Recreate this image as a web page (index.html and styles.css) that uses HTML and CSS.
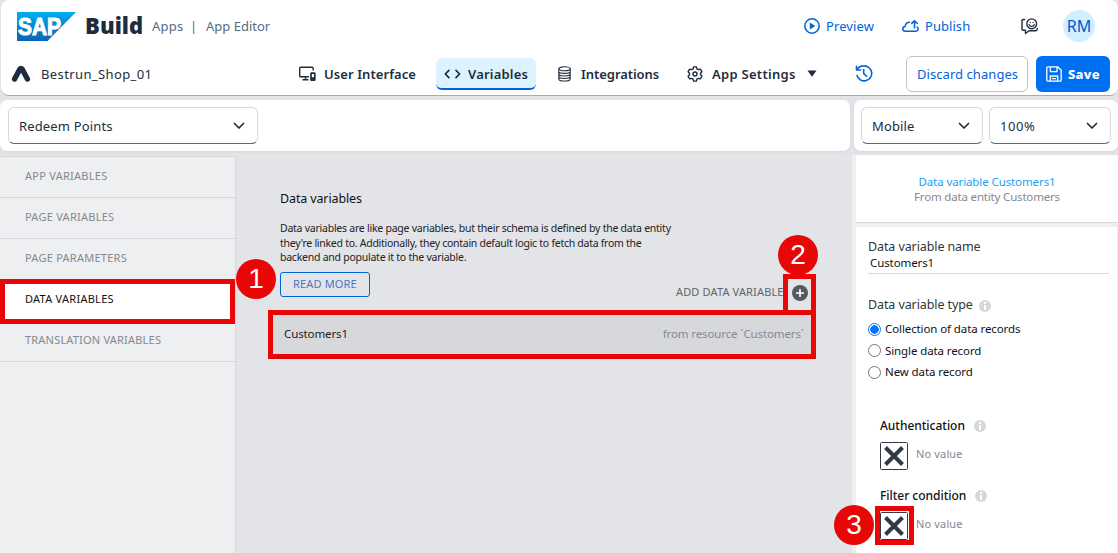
FILE: index.html
```html
<!DOCTYPE html>
<html lang="en">
<head>
<meta charset="utf-8">
<title>SAP Build Apps</title>
<link rel="stylesheet" href="styles.css">
</head>
<body>
<div class="app">
  <header class="header">
    <div class="shell-row">
      <svg class="logo" width="59" height="30" viewBox="0 0 59 30">
        <defs><linearGradient id="sap" x1="0" y1="0" x2="0" y2="1"><stop offset="0" stop-color="#00aeef"/><stop offset="1" stop-color="#0a62b5"/></linearGradient></defs>
        <path d="M0 1H59L30.500 30H0z" fill="url(#sap)"/>
        <text class="logo-text" x="1" y="23.500" textLength="43" lengthAdjust="spacingAndGlyphs">SAP</text>
      </svg>
      <span class="brand">Build</span>
      <span class="crumb crumb-apps">Apps</span>
      <span class="crumb crumb-sep">|</span>
      <span class="crumb crumb-editor">App Editor</span>
      <a class="link preview"><svg width="16" height="16" viewBox="0 0 16 16"><circle cx="8" cy="8" r="7.200" fill="none" stroke="currentColor" stroke-width="1.500"/><path d="M5.800 4.600L11.300 8L5.800 11.400z" fill="currentColor"/></svg><span>Preview</span></a>
      <a class="link publish"><svg width="17" height="16" viewBox="0 0 17 16" fill="none" stroke="currentColor" stroke-width="1.500" stroke-linejoin="round" stroke-linecap="round"><path d="M9 13.300H3.500C1.600 13.300 .800 12 .800 10.800C.800 9.300 2 8.500 3.200 8.500C3.400 6 5 4.300 7.600 4.300M12.500 10V3M9.800 5.400L12.500 2.700L15.200 5.400M9 13.300H13.700C16.500 13 16.700 10 15.300 9"/></svg><span>Publish</span></a>
      <svg class="feedback" width="17" height="17" viewBox="0 0 17 17" fill="none" stroke="currentColor" stroke-width="1.400" stroke-linejoin="round" stroke-linecap="round"><circle cx="10.700" cy="5.800" r="4.900"/><path d="M8.200 6.600C9 9 12.400 9 13.200 6.600M3.600 1.500H2.200Q1 1.500 1 2.800V11Q1 12.300 2.200 12.300H4.500V15.500L8 12.700H15Q16.300 12.300 16.300 10.500"/><path d="M9.200 4.400V4.500M12.200 4.400V4.500"/></svg>
      <span class="avatar">RM</span>
    </div>
    <div class="nav-row">
      <svg class="app-mark" width="20" height="18" viewBox="0 0 20 18"><path d="M3.600 14L8.800 4.200Q10 2.600 11.200 4.200L16.400 14" fill="none" stroke="#1d2d3e" stroke-width="5.400" stroke-linecap="round" stroke-linejoin="round"/></svg>
      <span class="project">Bestrun_Shop_01</span>
      <a class="tab tab-ui"><svg width="17" height="16" viewBox="0 0 17 16" fill="none" stroke="currentColor" stroke-width="1.400"><path d="M10 10.700H1.500Q.700 10.700 .700 9.900V2.100Q.700 1.300 1.500 1.300H13.300Q14.100 1.300 14.100 2.100V4.500M6.500 10.700V13.500M3.500 13.700H9.500"/><rect x="12" y="7.200" width="3.800" height="7" rx=".5" stroke-width="1.700"/><path d="M12 12.500H15.800" stroke-width="2.500"/></svg><span>User Interface</span></a>
      <a class="tab tab-vars"><svg width="17" height="14" viewBox="0 0 17 14" fill="none" stroke="currentColor" stroke-width="1.700" stroke-linecap="round" stroke-linejoin="round"><path d="M4.900 3.300L1.300 7L4.900 10.700M12 3.300L15.600 7L12 10.700"/></svg><span>Variables</span></a>
      <a class="tab tab-int"><svg width="13" height="16" viewBox="0 0 13 16" fill="none" stroke="currentColor" stroke-width="1.100"><ellipse cx="6.500" cy="2.800" rx="5.700" ry="2"/><path d="M.800 2.800V13C.800 15.700 12.200 15.700 12.200 13V2.800M.800 5.400C.800 8 12.200 8 12.200 5.400M.800 8C.800 10.600 12.200 10.600 12.200 8M.800 10.500C.800 13.100 12.200 13.100 12.200 10.500"/></svg><span>Integrations</span></a>
      <a class="tab tab-set"><svg width="16" height="16" viewBox="0 0 16 16" fill="none" stroke="currentColor" stroke-width="1.400" stroke-linejoin="round"><path d="M6.600 .900H9.400L9.900 2.900L11.300 3.700L13.300 3.100L14.900 5.700L13.500 7.200V8.800L14.900 10.300L13.300 12.900L11.300 12.300L9.900 13.100L9.400 15.100H6.600L6.100 13.100L4.700 12.300L2.700 12.900L1.100 10.300L2.500 8.800V7.200L1.100 5.700L2.700 3.100L4.700 3.700L6.100 2.900z"/><circle cx="8" cy="8" r="2"/></svg><span>App Settings</span><svg class="caret" width="10" height="7" viewBox="0 0 10 7"><path d="M.500 .500H9.500L5.600 6.100Q5 6.800 4.400 6.100z" fill="currentColor"/></svg></a>
      <svg class="history" width="18" height="17" viewBox="0 0 18 17" fill="none" stroke="currentColor" stroke-width="1.600" stroke-linecap="round" stroke-linejoin="round"><path d="M1.500 1.300V5H5.600M1.800 4.800C3.500 1.800 6.200 .900 9 .900A7.500 7.500 0 1 1 2 10.500M8.700 4.600V8.500L11.500 11.300"/></svg>
      <button class="btn discard"><span>Discard changes</span></button>
      <button class="btn save"><svg width="16" height="16" viewBox="0 0 16 16" fill="none" stroke="currentColor" stroke-width="1.300" stroke-linejoin="round"><path d="M2 .800H11.600L15.200 4.200V14Q15.200 15.200 14 15.200H2Q.800 15.200 .800 14V2Q.800 .800 2 .800zM4.300 .800V5.600H11V.800M4.300 15V10H11.700V15M6 12.700H10"/></svg><span>Save</span></button>
    </div>
  </header>

  <div class="toolbars">
    <div class="toolbar"><div class="select page-select"><span>Redeem Points</span><svg width="12" height="8" viewBox="0 0 12 8"><path d="M1.500 1.500L6 6L10.500 1.500"/></svg></div></div>
    <div class="toolbar">
      <div class="select"><span>Mobile</span><svg width="12" height="8" viewBox="0 0 12 8"><path d="M1.500 1.500L6 6L10.500 1.500"/></svg></div>
      <div class="select"><span class="t-zoom">100%</span><svg width="12" height="8" viewBox="0 0 12 8"><path d="M1.500 1.500L6 6L10.500 1.500"/></svg></div>
    </div>
  </div>

  <div class="body">
    <nav class="side">
      <a class="side-item">APP VARIABLES</a>
      <a class="side-item">PAGE VARIABLES</a>
      <a class="side-item">PAGE PARAMETERS</a>
      <a class="side-item active">DATA VARIABLES</a>
      <a class="side-item">TRANSLATION VARIABLES</a>
    </nav>
    <main class="main">
      <h1>Data variables</h1>
      <div class="intro">
        <div>Data variables are like page variables, but their schema is defined by the data entity</div>
        <div class="intro-tight">they're linked to. Additionally, they contain default logic to fetch data from the</div>
        <div>backend and populate it to the variable.</div>
      </div>
      <button class="more"><span>READ MORE</span></button>
      <div class="add"><span>ADD DATA VARIABLE</span><svg width="16" height="16" viewBox="0 0 16 16"><circle cx="8" cy="8" r="8" fill="#555a60"/><path d="M8 4V12M4 8H12" stroke="#fff" stroke-width="1.600"/></svg></div>
      <div class="variable"><span class="v-name">Customers1</span><span class="v-source">from resource `Customers`</span></div>
    </main>
    <aside class="panel">
      <section class="panel-head"><div class="p-title">Data variable Customers1</div><div class="p-sub">From data entity Customers</div></section>
      <section class="panel-body">
        <div class="label">Data variable name</div>
        <div class="input"><span>Customers1</span></div>
        <div class="label type"><span>Data variable type</span><i class="info"></i></div>
        <div class="radio on"><i></i><span>Collection of data records</span></div>
        <div class="radio"><i></i><span>Single data record</span></div>
        <div class="radio"><i></i><span>New data record</span></div>
        <div class="field">
          <div class="field-name"><span>Authentication</span><i class="info"></i></div>
          <div class="field-value"><svg width="28" height="28" viewBox="0 0 28 28"><rect x=".5" y=".5" width="27" height="27" rx="1" fill="#fff" stroke="#303a48"/><path d="M5.500 5.500L22.500 22.500M22.500 5.500L5.500 22.500" stroke="#303a48" stroke-width="4"/></svg><span>No value</span></div>
        </div>
        <div class="field">
          <div class="field-name"><span>Filter condition</span><i class="info"></i></div>
          <div class="field-value"><svg width="28" height="28" viewBox="0 0 28 28"><rect x=".5" y=".5" width="27" height="27" rx="1" fill="#fff" stroke="#303a48"/><path d="M5.500 5.500L22.500 22.500M22.500 5.500L5.500 22.500" stroke="#303a48" stroke-width="4"/></svg><span>No value</span></div>
        </div>
      </section>
    </aside>
  </div>

  <div class="mark mark-side"></div>
  <div class="mark mark-add"></div>
  <div class="mark mark-row"></div>
  <div class="mark mark-filter"></div>
  <div class="step step-1">1</div>
  <div class="step step-2">2</div>
  <div class="step step-3">3</div>
</div>
</body>
</html>
```
FILE: styles.css
```css
* { box-sizing: border-box; }
body { margin: 0; font-family: "Noto Sans", "Open Sans", sans-serif; font-size: 13px; color: #1d2d3e; }
svg { flex: none; display: block; }
button { font: inherit; padding: 0; }
.app { position: relative; width: 1118px; height: 553px; background: #e3e4e8; overflow: hidden; display: flex; flex-direction: column; white-space: nowrap; }

.header { flex: none; height: 96px; margin-left: 1px; background: #fff; border-bottom: 1px solid #a3adb8; border-radius: 8px; margin-bottom: 4px; }
.shell-row { height: 52px; display: flex; align-items: center; padding-left: 16px; }
.logo-text { font: 700 23.5px "Liberation Sans", sans-serif; fill: #fff; stroke: #fff; stroke-width: 1.1px; }
.brand { width: 57px; margin-left: 9px; font-size: 22px; font-weight: 900; line-height: 30px; letter-spacing: .05px; margin-top: -2px; }
.crumb { color: #556b82; }
.crumb-apps { width: 31px; margin-left: 10px; letter-spacing: .2px; }
.crumb-sep { width: 5px; margin-left: 7px; }
.crumb-editor { width: 65px; margin-left: 11px; }
.link { display: flex; align-items: center; color: #0064d9; }
.preview { width: 70px; gap: 6px; margin-left: 533px; letter-spacing: .1px; }
.publish { width: 69px; gap: 6px; margin-left: 28px; letter-spacing: .05px; }
.feedback { margin-left: 50px; }
.avatar { width: 32px; height: 32px; margin-left: 25px; border-radius: 50%; background: #d1efff; color: #0057d2; font-size: 16px; line-height: 32px; text-align: center; }

.nav-row { height: 43px; display: flex; align-items: center; padding-left: 10px; }
.project { width: 111px; margin-left: 10px; letter-spacing: .38px; }
.tab { height: 32px; display: flex; align-items: center; gap: 8px; font-weight: 600; }
.tab-ui { width: 117px; margin-left: 147px; letter-spacing: .08px; }
.tab-vars { width: 100px; margin-left: 20px; padding-left: 8px; gap: 7px; background: #dcf3ff; border-bottom: 2px solid #0064d9; border-radius: 6px; letter-spacing: .2px; }
.tab-vars > * { margin-top: 2px; }
.tab-int { width: 102px; margin-left: 22px; gap: 10px; letter-spacing: -.05px; }
.tab-set { width: 130px; margin-left: 27px; gap: 9px; letter-spacing: .28px; }
.caret { margin-left: auto; }
.history { color: #0064d9; margin-left: 38px; }
.btn { height: 36px; border-radius: 6px; display: flex; align-items: center; }
.discard { width: 122px; margin-left: 33px; border: 1px solid #bcc3ca; background: #fff; color: #0064d9; padding-left: 10px; letter-spacing: .06px; }
.save { width: 74px; margin-left: 8px; border: 0; background: #0070f2; color: #fff; padding-left: 10px; gap: 6px; font-weight: 800; letter-spacing: .3px; }

.toolbars { flex: none; display: flex; gap: 4px; height: 51px; margin-bottom: 4px; }
.toolbar { width: 850px; display: flex; gap: 6px; padding: 7px 7px 7px 8px; background: #fff; border-radius: 7px; box-shadow: 0 1px 3px #d4d6da; }
.toolbar + .toolbar { width: 264px; padding-left: 7px; }
.select { flex: 1; display: flex; align-items: center; justify-content: space-between; padding: 0 12px 0 10px; border: 1px solid #d5d9e0; border-bottom: 1px solid #556b82; border-radius: 6px; letter-spacing: .15px; }
.page-select { flex: none; width: 250px; }
.select svg { fill: none; stroke: #1d2d3e; stroke-width: 1.7; stroke-linecap: round; stroke-linejoin: round; }
.t-zoom { letter-spacing: .6px; }

.body { flex: 1; min-height: 0; display: flex; }
.side { width: 236px; background: #eeeff1; border: 1px solid #d5d7da; border-width: 1px 1px 0 0; margin-top: 1px; }
.side-item { display: block; height: 41px; line-height: 38px; padding-left: 25px; border-bottom: 1px solid #d5d7da; font-size: 11px; letter-spacing: .26px; color: #85898f; }
.side-item:last-child { letter-spacing: .2px; }
.side-item.active { background: #fff; color: #111; }
.main { width: 616px; padding: 34px 36px 0 44px; color: #222; }
.main h1 { margin: 0; font-size: 12.5px; line-height: 20px; font-weight: 400; letter-spacing: -.13px; color: #111; }
.intro { margin-top: 12px; font-size: 10.5px; line-height: 14.5px; letter-spacing: -.245px; }
.intro-tight { letter-spacing: -.27px; }
.more { display: block; width: 90px; height: 25px; margin-top: 7px; border: 1px solid #0064d9; border-radius: 3px; background: none; color: #5272c6; font-size: 11px; line-height: 22px; letter-spacing: .15px; }
.add { display: flex; justify-content: space-between; align-items: center; height: 16px; margin: -12px 8px 0 396px; font-size: 11px; letter-spacing: .15px; color: #606468; }
.add span { margin-top: -2px; }
.variable { display: flex; justify-content: space-between; align-items: center; height: 48px; margin: 9px 0 0 -12px; padding: 0 12px 0 16px; background: #d7d8dc; font-size: 11.5px; letter-spacing: -.12px; }
.v-source { color: #85898f; }

.panel { width: 266px; border-left: 4px solid #eeeff1; background: #eeeff1; }
.panel-head { height: 68px; padding-top: 19px; background: #fff; border-bottom: 1px solid #d5d9e0; text-align: center; font-size: 11.5px; line-height: 15px; color: #85898f; }
.p-title { color: #1ba1f4; letter-spacing: -.1px; }
.p-sub { letter-spacing: -.18px; }
.panel-body { height: 330px; margin: 4px 1px 0 0; padding: 11px 8px 0 12px; background: #fff; color: #111; }
.label { font-size: 12.5px; line-height: 18px; letter-spacing: -.1px; color: #32363a; }
.input { height: 18px; border-bottom: 1px solid #d5d9e0; padding-left: 2px; font-size: 11.5px; line-height: 14px; letter-spacing: -.1px; }
.type { margin: 22px 0 4px; display: flex; align-items: center; gap: 6px; }
.info { position: relative; display: block; width: 12px; height: 12px; margin-top: 1px; border-radius: 50%; background: #d5d7da; }
.info::before { content: ""; position: absolute; left: 5px; top: 2px; width: 2px; height: 2px; background: #fff; }
.info::after { content: ""; position: absolute; left: 5px; top: 5px; width: 2px; height: 5px; background: #fff; }
.radio { display: flex; align-items: center; gap: 4px; height: 21.500px; font-size: 11.5px; letter-spacing: -.1px; }
.radio i { width: 13px; height: 13px; border: 1px solid #767676; border-radius: 50%; margin-top: 1px; }
.radio.on i { border-color: #0075ff; background: radial-gradient(circle, #0075ff 4px, #fff 4.5px); }
.field { height: 70px; padding-left: 12px; }
.radio + .field { margin-top: 34px; }
.field-name { display: flex; align-items: center; gap: 9px; height: 18px; font-size: 12px; font-weight: 500; letter-spacing: -.02px; }
.field-value { display: flex; gap: 8px; margin-top: 7px; font-size: 11px; line-height: 24px; letter-spacing: .15px; color: #85898f; }

.mark { position: absolute; border: 5px solid #e90606; }
.mark-side { left: 0; top: 279px; width: 235px; height: 45px; }
.mark-add { left: 783px; top: 274px; width: 33px; height: 41px; }
.mark-row { left: 268px; top: 310px; width: 548px; height: 49px; }
.mark-filter { left: 875px; top: 506px; width: 39px; height: 39px; }
.step { position: absolute; width: 40px; height: 40px; border-radius: 50%; background: #e90606; color: #fff; font: 28px/40px "Liberation Sans", sans-serif; text-align: center; }
.step-1 { left: 236px; top: 259px; }
.step-2 { left: 778px; top: 235px; }
.step-3 { left: 834px; top: 505px; }
```
